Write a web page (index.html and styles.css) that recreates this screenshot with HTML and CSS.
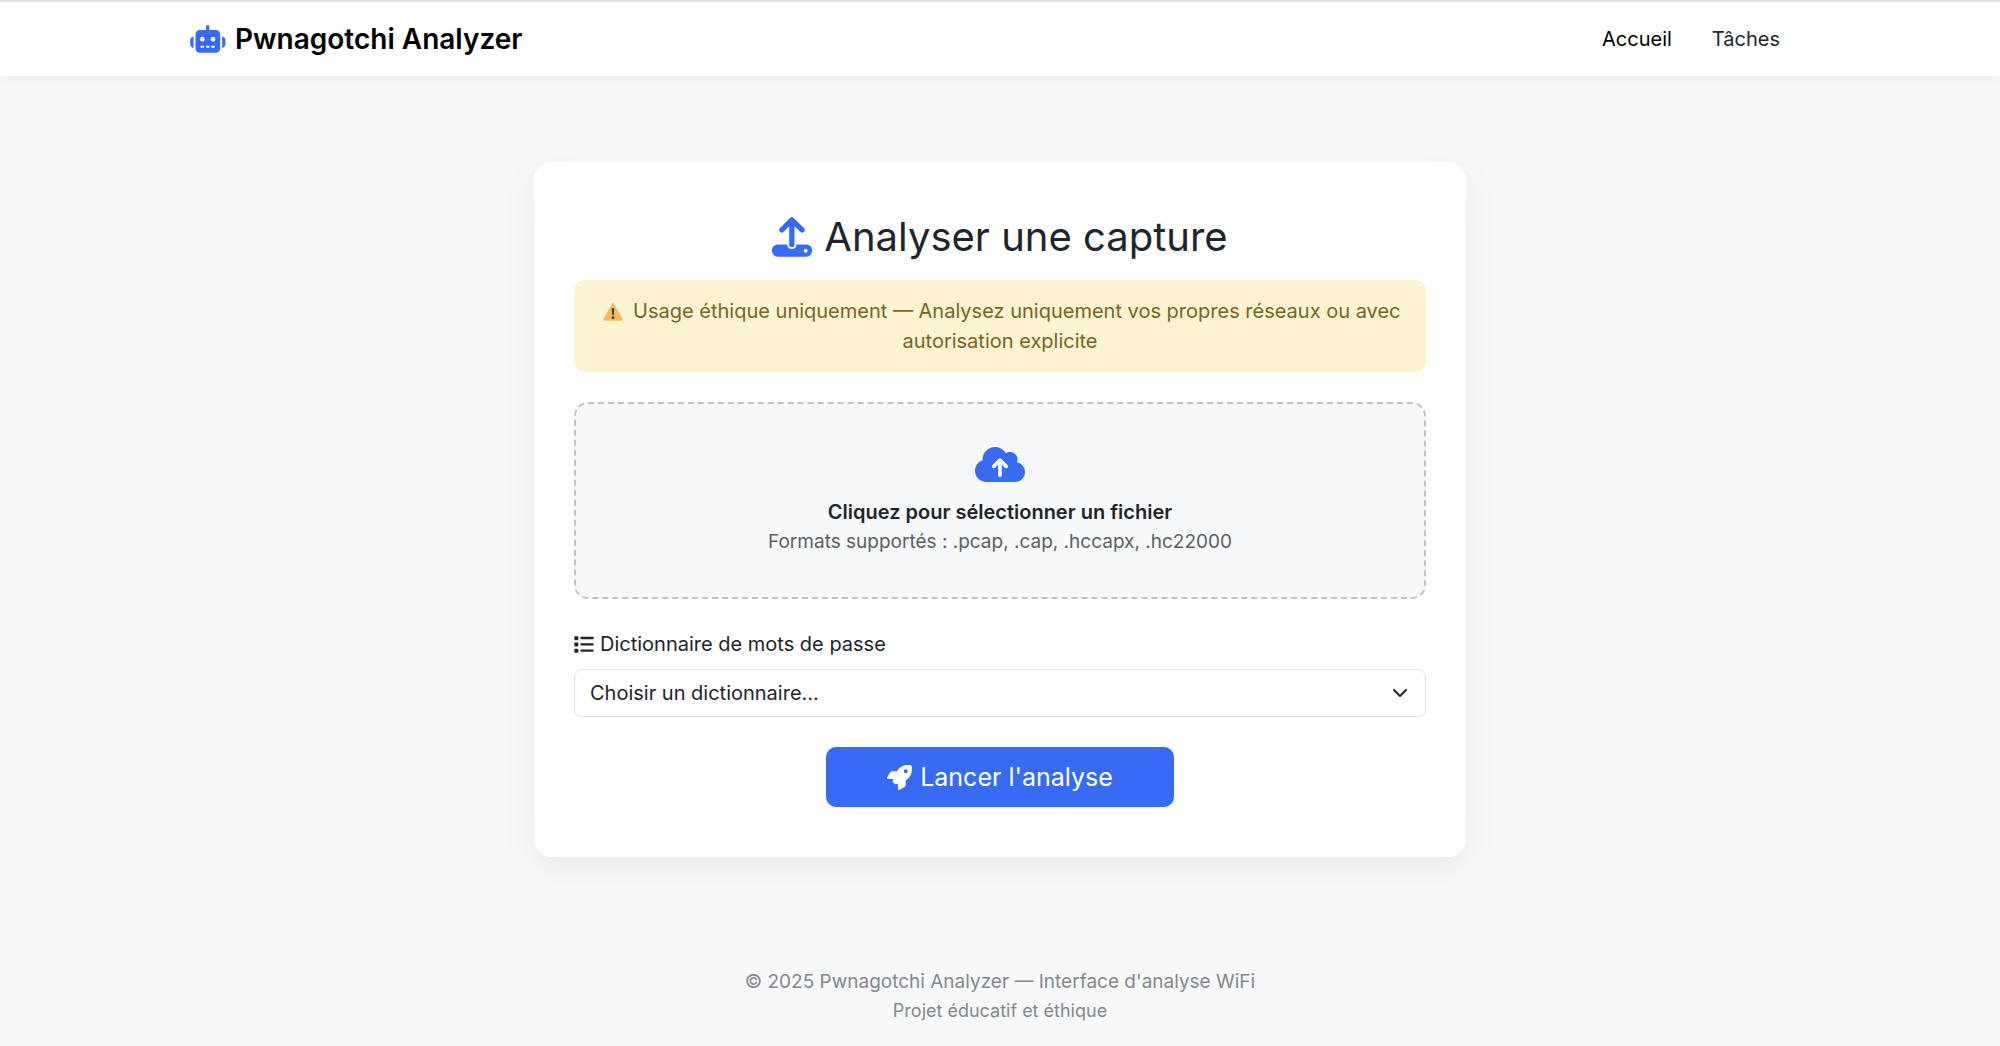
FILE: index.html
```html
<!DOCTYPE html>
<html lang="fr">
<head>
<meta charset="utf-8">
<meta name="viewport" content="width=device-width, initial-scale=1">
<title>Pwnagotchi Analyzer</title>
<link rel="stylesheet" href="styles.css">
</head>
<body>
<header class="navbar">
  <div class="container">
    <a class="brand" href="#">
      <svg class="icon-robot" viewBox="0 0 108 85" aria-hidden="true">
        <path d="M48 5a5 5 0 0 1 10 0v10H78a13 13 0 0 1 13 13V71a13 13 0 0 1-13 13H29a13 13 0 0 1-13-13V28a13 13 0 0 1 13-13H48zM10 35v35C4 69 0 64 0 58V46c0-6 4-10 10-11zM97 35v35c6-1 10-6 10-12V46c0-6-4-10-10-11z"/>
        <g class="knockout"><circle cx="37" cy="43" r="7"/><circle cx="69" cy="43" r="7"/><rect x="31" y="63" width="11" height="6" rx="3"/><rect x="48" y="63" width="11" height="6" rx="3"/><rect x="64" y="63" width="11" height="6" rx="3"/></g>
      </svg>
      <span>Pwnagotchi Analyzer</span>
    </a>
    <nav class="nav">
      <a class="nav-link active" href="#">Accueil</a>
      <a class="nav-link" href="#">Tâches</a>
    </nav>
  </div>
</header>
<main class="main">
  <form class="card">
    <h1 class="title">
      <svg class="icon-upload" viewBox="0 0 121 121" aria-hidden="true">
        <rect y="83" width="121" height="37" rx="17"/>
        <path class="gap" d="M60 60V83"/>
        <path class="arrow" d="M60 9V83M30 39L60 9L91 39"/>
        <circle class="knockout" cx="102" cy="102" r="6"/>
      </svg>
      <span>Analyser une capture</span>
    </h1>
    <p class="alert">
      <svg class="icon-warning" viewBox="0 0 60 54" aria-hidden="true">
        <path class="sign" d="M27 3q3-5 6 0L59 48q2 5-3 5H4q-5 0-3-5z"/>
        <path class="mark" d="M26 17q4-4 8 0L32 37H28z"/><circle class="mark" cx="30" cy="44" r="4"/>
      </svg>
      Usage éthique uniquement — Analysez uniquement vos propres réseaux ou avec autorisation explicite
    </p>
    <label class="dropzone">
      <input class="file-input" type="file" accept=".pcap,.cap,.hccapx,.hc22000">
      <svg class="icon-cloud" viewBox="0 32 640 448" aria-hidden="true">
        <path d="M144 480C64.500 480 0 415.500 0 336c0-62.800 40.200-116.200 96.200-135.900c-.1-2.700-.2-5.400-.2-8.100c0-88.400 71.600-160 160-160c59.300 0 111 32.200 138.700 80.200C409.900 102 428.300 96 448 96c53 0 96 43 96 96c0 12.200-2.300 23.800-6.400 34.600C596 238.400 640 290.100 640 352c0 70.700-57.300 128-128 128H144zm79-217c-9.400 9.400-9.400 24.600 0 33.900s24.600 9.400 33.900 0l39-39V392c0 13.300 10.700 24 24 24s24-10.700 24-24V257.900l39 39c9.400 9.400 24.600 9.400 33.900 0s9.400-24.600 0-33.900l-80-80c-9.400-9.400-24.600-9.400-33.900 0l-80 80z"/>
      </svg>
      <span class="drop-title">Cliquez pour sélectionner un fichier</span>
      <span class="drop-hint">Formats supportés : .pcap, .cap, .hccapx, .hc22000</span>
    </label>
    <label class="field-label" for="dictionary">
      <svg class="icon-list" viewBox="0 0 60 50" aria-hidden="true">
        <rect x="1" y="0" width="12" height="12" rx="3"/><rect x="1" y="19" width="12" height="12" rx="3"/><rect x="1" y="38" width="12" height="12" rx="3"/>
        <rect x="19" y="2" width="40" height="7" rx="3"/><rect x="19" y="21" width="40" height="7" rx="3"/><rect x="19" y="40" width="40" height="7" rx="3"/>
      </svg>
      <span>Dictionnaire de mots de passe</span>
    </label>
    <div class="select-wrap">
      <select class="select" id="dictionary">
        <option>Choisir un dictionnaire...</option>
      </select>
      <svg class="icon-chevron" viewBox="0 0 16 16" aria-hidden="true"><path d="m2 5 6 6 6-6"/></svg>
    </div>
    <button class="submit" type="submit">
      <svg class="icon-rocket" viewBox="0 0 512 512" aria-hidden="true">
        <path d="M156.600 384.900L125.700 354c-8.500-8.500-11.500-20.800-7.700-32.200c3-8.900 7-20.500 11.800-33.800L24 288c-8.600 0-16.600-4.600-20.900-12.100s-4.200-16.700 .2-24.100l52.500-88.500c13-21.900 36.500-35.300 61.900-35.300l82.300 0c2.400-4 4.800-7.700 7.200-11.300C289.100-4.100 411.100-8.100 483.900 5.300c11.600 2.100 20.600 11.200 22.800 22.800c13.400 72.900 9.300 194.800-111.400 276.700c-3.500 2.400-7.300 4.800-11.300 7.200v82.300c0 25.400-13.400 49-35.300 61.900l-88.500 52.500c-7.400 4.400-16.600 4.500-24.100 .2s-12.100-12.200-12.100-20.900V380.800c-14.100 4.900-26.400 8.900-35.700 11.900c-11.200 3.600-23.400 .5-31.800-7.800zM384 168a40 40 0 1 0 0-80 40 40 0 1 0 0 80z"/>
      </svg>
      <span>Lancer l'analyse</span>
    </button>
  </form>
</main>
<footer class="footer">
  <p class="copyright">© 2025 Pwnagotchi Analyzer — Interface d'analyse WiFi</p>
  <p class="tagline">Projet éducatif et éthique</p>
</footer>
</body>
</html>
```
FILE: styles.css
```css
* { box-sizing: border-box; }
body {
  margin: 0;
  background: #f7f8fa;
  color: #212529;
  font-family: Inter, "Liberation Sans", sans-serif;
  font-size: 20px;
  line-height: 30px;
}
svg { flex: none; fill: currentColor; }
a { color: inherit; text-decoration: none; }
.navbar {
  background: #fff;
  border-top: 2px solid #e4e6e8;
  box-shadow: 0 2px 12px rgba(0, 0, 0, .06);
}
.container {
  display: flex;
  align-items: center;
  justify-content: space-between;
  max-width: 1620px;
  min-height: 74px;
  margin: 0 auto;
  padding-right: 30px;
}
.brand {
  display: flex;
  align-items: center;
  gap: 9px;
  color: #000;
  font-size: 28px;
  font-weight: 600;
}
.icon-robot { width: 36px; height: 28px; color: #386bf3; }
.knockout { fill: #fff; }
.nav { display: flex; gap: 40px; }
.nav-link.active { color: #000; }
.main { padding: 86px 20px; }
.card {
  display: flex;
  flex-direction: column;
  max-width: 932px;
  margin: 0 auto;
  padding: 50px 40px;
  background: #fff;
  border-radius: 18px;
  box-shadow: 0 10px 36px rgba(0, 0, 0, .06);
}
.title {
  display: flex;
  align-items: center;
  justify-content: center;
  gap: 12px;
  margin: 0 0 18px;
  font-size: 40px;
  font-weight: 400;
  line-height: 50px;
}
.icon-upload { width: 40px; height: 40px; color: #386bf3; }
.arrow, .gap { fill: none; stroke-linecap: round; stroke-linejoin: round; }
.arrow { stroke: currentColor; stroke-width: 16; }
.gap { stroke: #fff; stroke-width: 28; }
.alert {
  margin: 0 0 30px;
  padding: 16px 20px;
  border-radius: 10px;
  background: #fcf3d0;
  color: #7a6426;
  text-align: center;
}
.icon-warning { width: 20px; height: 18px; margin: 0 4px; vertical-align: -3px; }
.sign { fill: #efbb62; }
.mark { fill: #4d3a22; }
.dropzone {
  display: flex;
  flex-direction: column;
  align-items: center;
  margin-bottom: 30px;
  padding: 43px 20px 40px;
  border: 2px dashed #bfc4cc;
  border-radius: 14px;
  background: #f7f8fa;
  cursor: pointer;
}
.file-input { position: absolute; width: 1px; height: 1px; opacity: 0; }
.icon-cloud { width: 50px; height: 35px; margin-bottom: 15px; color: #386bf3; }
.drop-title { font-weight: 600; }
.drop-hint { color: #5d6063; font-size: 19px; }
.field-label { display: flex; align-items: center; gap: 6px; margin-bottom: 10px; }
.icon-list { width: 20px; height: 17px; }
.select-wrap { position: relative; margin-bottom: 30px; }
.select {
  display: block;
  width: 100%;
  height: 48px;
  padding: 0 44px 0 15px;
  border: 1px solid #dee2e6;
  border-radius: 8px;
  background: #fff;
  color: inherit;
  font: inherit;
  appearance: none;
}
.icon-chevron {
  position: absolute;
  top: 16px;
  right: 18px;
  width: 16px;
  height: 16px;
  fill: none;
  stroke: currentColor;
  stroke-width: 2;
  stroke-linecap: round;
  stroke-linejoin: round;
  pointer-events: none;
}
.submit {
  display: flex;
  align-items: center;
  justify-content: center;
  gap: 8px;
  align-self: center;
  padding: 15px 61px;
  border: 0;
  border-radius: 10px;
  background: #386bf3;
  color: #fff;
  font: inherit;
  font-size: 25px;
}
.icon-rocket { width: 25px; height: 25px; }
.footer { padding: 24px 20px; color: #85888b; line-height: 29px; text-align: center; }
.footer p { margin: 0; }
.copyright { font-size: 19px; }
.tagline { font-size: 18px; }
```
